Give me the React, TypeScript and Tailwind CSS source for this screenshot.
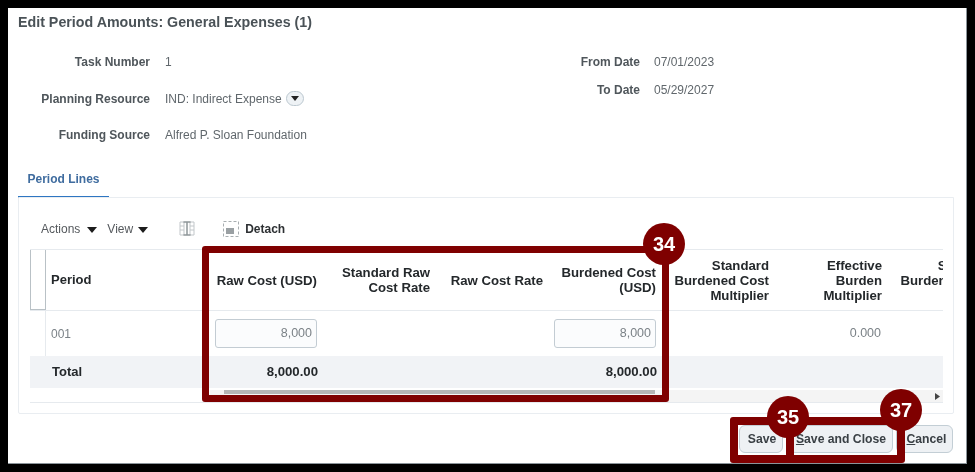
import React from 'react';

const Label = ({ children }: { children: React.ReactNode }) => (
  <div className="text-right font-bold text-[#4f565b]">{children}</div>
);

const HeadCell = ({ children }: { children: React.ReactNode }) => (
  <div className="flex items-center justify-end pr-[6px] text-right text-[13.2px] font-bold leading-[15px] text-[#24282b]">
    <div>{children}</div>
  </div>
);

const AmountInput = () => (
  <div className="flex h-[29px] w-[102.5px] items-center justify-end rounded-[3px] border border-[#c3ccd3] bg-[#fbfcfd] pr-[4px] text-[12.5px] text-[#7b8287]">
    8,000
  </div>
);

const Caret = ({ className }: { className: string }) => (
  <svg width="10" height="6" viewBox="0 0 10 6" className={`mt-[3px] ${className}`}>
    <path d="M0 0h10L5 6z" fill="#1c1c1c" />
  </svg>
);

const FootButton = ({ className, children }: { className: string; children: React.ReactNode }) => (
  <div className={`flex h-[28px] items-center justify-center rounded-[6px] border border-[#c3ced5] bg-[#eef1f4] text-[12.2px] font-bold text-[#3a4045] ${className}`}>
    {children}
  </div>
);

const Marker = ({ className, children }: { className: string; children: React.ReactNode }) => (
  <div className={`absolute flex h-[42px] w-[42px] items-center justify-center rounded-full bg-[#7f0000] text-[20px] font-bold text-white ${className}`}>
    {children}
  </div>
);

export default function App() {
  return (
    <div className="relative h-[472px] w-[975px] overflow-hidden bg-black p-[8px] font-['Liberation_Sans',Arial,sans-serif] text-[12px] blur-[0.4px]">
      <div className="flex h-[456px] flex-col border-r border-b border-[#8b949a] bg-white pl-[10px] pr-[12px]">
        <div className="pt-[6px] text-[14.25px] font-bold leading-[16px] text-[#4a5257]">
          Edit Period Amounts: General Expenses (1)
        </div>

        {/* header form */}
        <div className="mt-[13px] flex h-[118px] text-[#60676c]">
          <div className="grid w-[560px] grid-cols-[132px_1fr] grid-rows-[37px_37px_36px] items-center gap-x-[15px]">
            <Label>Task Number</Label>
            <div>1</div>
            <Label>Planning Resource</Label>
            <div className="flex items-center gap-[4px]">
              IND: Indirect Expense
              <span className="flex h-[15px] w-[18px] items-center justify-center rounded-full border border-[#bcc8d0] bg-[#eef2f5]">
                <svg width="8" height="5" viewBox="0 0 8 5"><path d="M0 0h8L4 5z" fill="#222" /></svg>
              </span>
            </div>
            <Label>Funding Source</Label>
            <div>Alfred P. Sloan Foundation</div>
          </div>
          <div className="grid grid-cols-[62px_1fr] grid-rows-[37px_19px] items-center gap-x-[14px]">
            <Label>From Date</Label>
            <div>07/01/2023</div>
            <Label>To Date</Label>
            <div>05/29/2027</div>
          </div>
        </div>

        {/* tab */}
        <div className="h-[37px] pt-[8px]">
          <div className="flex h-[29px] w-[91px] items-start justify-center border-b-[2px] border-[#2e76c2] pt-[1px] font-bold text-[#3f6c9f]">
            Period Lines
          </div>
        </div>

        {/* tab body */}
        <div className="-mt-[1px] flex h-[217px] flex-col rounded-b-[2px] border border-[#e9edf1] pl-[11px] pr-[10px]">
          <div className="flex h-[51px] items-center pl-[11px] pt-[10px] text-[#55595d]">
            <span>Actions</span>
            <Caret className="ml-[7px]" />
            <span className="ml-[10px]">View</span>
            <Caret className="ml-[5px]" />
            <svg width="16" height="17" viewBox="0 0 16 17" className="ml-[31px]" fill="none">
              <path d="M1 2h4v13H1zM11 2h4v13h-4zM1 6h4M1 10h4M11 6h4M11 10h4" stroke="#c2c7ca" />
              <path d="M4.5 2h7M4.5 15h7M8 2v13" stroke="#8f9699" strokeWidth="1.5" />
            </svg>
            <svg width="16" height="16" viewBox="0 0 16 16" className="ml-[28px]" fill="none">
              <rect x="0.5" y="0.5" width="15" height="15" stroke="#a8aeb1" strokeDasharray="3 2" />
              <rect x="3" y="7" width="8" height="6" fill="#9aa0a3" />
            </svg>
            <span className="ml-[6px] font-bold text-[#2d3033]">Detach</span>
          </div>

          <div className="w-[913px] overflow-hidden border-t border-[#e6eaee]">
            <div className="grid w-[971px] grid-cols-[16px_164px_repeat(7,113px)] grid-rows-[60px_46px_32px]">
              {/* header row */}
              <div className="border border-t-0 border-[#b9c1c6]" />
              <div className="flex items-center pl-[5px] text-[13px] font-bold text-[#24282b]">Period</div>
              <HeadCell>Raw Cost (USD)</HeadCell>
              <HeadCell>Standard Raw<br />Cost Rate</HeadCell>
              <HeadCell>Raw Cost Rate</HeadCell>
              <HeadCell>Burdened Cost<br />(USD)</HeadCell>
              <HeadCell>Standard<br />Burdened Cost<br />Multiplier</HeadCell>
              <HeadCell>Effective<br />Burden<br />Multiplier</HeadCell>
              <HeadCell>Standard<br />Burdened Cost<br />Rate</HeadCell>

              {/* data row */}
              <div className="border-r border-t border-[#e6eaee]" />
              <div className="flex items-center border-t border-[#e6eaee] pl-[5px] text-[#7b8287]">001</div>
              <div className="flex items-center justify-end border-t border-[#e6eaee] pr-[6px]"><AmountInput /></div>
              <div className="border-t border-[#e6eaee]" />
              <div className="border-t border-[#e6eaee]" />
              <div className="flex items-center justify-end border-t border-[#e6eaee] pr-[6px]"><AmountInput /></div>
              <div className="border-t border-[#e6eaee]" />
              <div className="flex items-center justify-end border-t border-[#e6eaee] pr-[7px] text-[12.5px] text-[#7b8287]">0.000</div>
              <div className="border-t border-[#e6eaee]" />

              {/* total row */}
              <div className="col-span-2 flex items-center bg-[#f1f3f6] pl-[22px] text-[13px] font-bold text-[#24282b]">Total</div>
              <div className="flex items-center justify-end bg-[#f1f3f6] pr-[5px] text-[13.2px] font-bold text-[#24282b]">8,000.00</div>
              <div className="bg-[#f1f3f6]" />
              <div className="bg-[#f1f3f6]" />
              <div className="flex items-center justify-end bg-[#f1f3f6] pr-[5px] text-[13.2px] font-bold text-[#24282b]">8,000.00</div>
              <div className="col-span-3 bg-[#f1f3f6]" />
            </div>

            {/* horizontal scrollbar, starts after the frozen columns */}
            <div className="mt-[2px] flex h-[12px] w-[913px] items-start pl-[180px]">
              <div className="flex h-full flex-1 items-start bg-[#f4f4f4]">
                <div className="ml-[14px] h-[4px] w-[431px] bg-[#b5b5b5]" />
                <svg width="5" height="7" viewBox="0 0 5 7" className="ml-[280px] mt-[3px]"><path d="M0 0l5 3.5L0 7z" fill="#444" /></svg>
              </div>
            </div>
          </div>
          <div className="w-[913px] border-t border-[#e6eaee]" />
        </div>

        {/* footer buttons */}
        <div className="mt-[11px] flex justify-end gap-[3px] pr-[1px]">
          <FootButton className="w-[44px] pl-[2px]">Save</FootButton>
          <FootButton className="ml-[3px] w-[104px]"><span><u>S</u>ave and Close</span></FootButton>
          <FootButton className="w-[57px] pl-[4px]"><span><u>C</u>ancel</span></FootButton>
        </div>
      </div>

      {/* annotation overlays */}
      <div className="absolute left-[202px] top-[246px] h-[156px] w-[467px] rounded-[3px] border-[7px] border-[#7f0000]" />
      <div className="absolute left-[730px] top-[417px] h-[46px] w-[64px] rounded-[3px] border-[8px] border-[#7f0000]" />
      <div className="absolute left-[786px] top-[417px] h-[46px] w-[119px] rounded-[3px] border-[8px] border-[#7f0000]" />
      <Marker className="left-[643px] top-[223px]">34</Marker>
      <Marker className="left-[767px] top-[396px]">35</Marker>
      <Marker className="left-[880px] top-[389px]">37</Marker>
    </div>
  );
}
